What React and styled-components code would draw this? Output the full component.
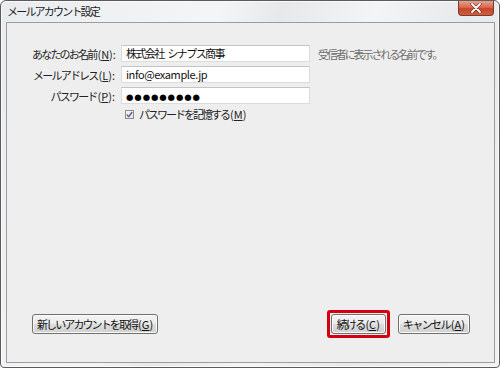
import React from "react";
import styled, { createGlobalStyle } from "styled-components";

const Global = createGlobalStyle`
  html, body { margin: 0; padding: 0; background: #ffffff; }
  body { font-family: "Noto Sans CJK JP", "Noto Sans", sans-serif; font-size: 11px; color: #1a1a1a; }
`;

const Window = styled.div`
  box-sizing: border-box;
  width: 500px;
  height: 368px;
  display: flex;
  flex-direction: column;
  border: 1px solid #5b5b5b;
  border-radius: 6px 6px 4px 4px;
  background: linear-gradient(110deg, #e9ecef 0%, #f4f5f6 35%, #e6e8ea 45%, #f3f4f5 60%, #e7e9eb 75%, #f1f2f3 100%);
  box-shadow: inset 0 0 0 1px #fafafa;
  overflow: hidden;
`;

const TitleBar = styled.div`
  height: 21px;
  display: flex;
  align-items: flex-start;
  justify-content: space-between;
  padding: 0 5px 0 6px;
`;

const Title = styled.div`
  font-size: 11px;
  line-height: 12px;
  padding-top: 4px;
  color: #222;
  letter-spacing: -1.8px;
`;

const CloseBtn = styled.div`
  width: 36px;
  height: 15px;
  box-sizing: border-box;
  border: 1px solid #7a3a2e;
  border-top: none;
  border-radius: 0 0 4px 4px;
  background: linear-gradient(#e8a090 0%, #d7694f 45%, #c5442a 55%, #d35c3d 100%);
  display: flex;
  align-items: center;
  justify-content: center;
`;

const Panel = styled.div`
  flex: 1;
  margin: 0 4px 4px 5px;
  border: 1px solid #9c9c9c;
  background: #eeeeee;
  display: flex;
  flex-direction: column;
  justify-content: space-between;
  padding: 22px 24px 24px 25px;
`;

const Form = styled.div`
  display: grid;
  grid-template-columns: 82px 189px auto;
  column-gap: 7px;
  row-gap: 4px;
  align-items: center;
`;

const Label = styled.div`
  text-align: right;
  white-space: nowrap;
  font-size: 11px;
  letter-spacing: -1.8px;
  color: #222;
  margin-right: -1px;
`;

const Key = styled.span`
  letter-spacing: 0;
  margin-left: 1px;
`;

const Input = styled.div`
  box-sizing: border-box;
  height: 17px;
  background: #fff;
  border: 1px solid #dcdcdc;
  border-top-color: #c4c4c4;
  font-size: 11px;
  line-height: 15px;
  padding-left: 4px;
  color: #111;
  white-space: nowrap;
  overflow: hidden;
  word-spacing: 3px;
  letter-spacing: ${(p) => p.$ls || 0}px;
`;

const Dots = styled.span`
  font-size: 8.5px;
  letter-spacing: 0.9px;
  color: #000;
  font-family: "DejaVu Sans", sans-serif;
`;

const Hint = styled.div`
  font-size: 11px;
  color: #6d6d6d;
  padding-left: 1px;
  white-space: nowrap;
  letter-spacing: -2.1px;
`;

const CheckRow = styled.label`
  grid-column: 2 / 4;
  display: flex;
  align-items: center;
  gap: 5px;
  padding-left: 4px;
  margin-top: -2px;
  font-size: 11px;
  letter-spacing: -2px;
  color: #222;
`;

const Box = styled.span`
  box-sizing: border-box;
  width: 9px;
  height: 9px;
  border: 1px solid #8e8e8e;
  background: linear-gradient(#f4f4f4, #e2e2e2);
  display: inline-flex;
  align-items: center;
  justify-content: center;
`;

const Footer = styled.div`
  display: flex;
  align-items: center;
  justify-content: space-between;
`;

const Right = styled.div`
  display: flex;
  align-items: center;
  gap: 8px;
`;

const Button = styled.div`
  box-sizing: border-box;
  height: 20px;
  padding: 0 ${(p) => p.$pad || 6}px;
  border: 1px solid #707070;
  border-radius: 3px;
  background: linear-gradient(#f4f4f4 0%, #ebebeb 48%, #dddddd 52%, #d0d0d0 100%);
  box-shadow: inset 0 0 0 1px #fbfbfb;
  font-size: 11px;
  line-height: 18px;
  color: #111;
  white-space: nowrap;
  letter-spacing: ${(p) => p.$ls || -1.8}px;
  display: flex;
  align-items: center;
`;

const Highlight = styled.div`
  border: 3px solid #d5000f;
  border-radius: 3px;
  padding: 1px;
  display: flex;
`;

const U = styled.span`
  text-decoration: underline;
  text-underline-offset: 1px;
`;

export default function App() {
  return (
    <>
      <Global />
      <Window>
        <TitleBar>
          <Title>メールアカウント設定</Title>
          <CloseBtn>
            <svg width="12" height="10" viewBox="0 0 12 10">
              <path d="M2 1 L10 9 M10 1 L2 9" stroke="#5a2418" strokeWidth="3" strokeLinecap="round" />
              <path d="M2 1 L10 9 M10 1 L2 9" stroke="#ffffff" strokeWidth="1.8" strokeLinecap="round" />
            </svg>
          </CloseBtn>
        </TitleBar>
        <Panel>
          <Form>
            <Label>
              あなたのお名前<Key>(<U>N</U>):</Key>
            </Label>
            <Input $ls={-1.6}>株式会社 シナプス商事</Input>
            <Hint>受信者に表示される名前です。</Hint>
            <Label>
              メールアドレス<Key>(<U>L</U>):</Key>
            </Label>
            <Input $ls={-0.4}>info@example.jp</Input>
            <div />
            <Label>
              パスワード<Key>(<U>P</U>):</Key>
            </Label>
            <Input>
              <Dots>●●●●●●●●●</Dots>
            </Input>
            <div />
            <div />
            <CheckRow>
              <Box>
                <svg width="7" height="7" viewBox="0 0 7 7">
                  <path d="M0.8 3.6 L2.7 5.6 L6.2 1" stroke="#4a5a78" strokeWidth="1.3" fill="none" />
                </svg>
              </Box>
              <span>
                パスワードを記憶する<Key>(<U>M</U>)</Key>
              </span>
            </CheckRow>
          </Form>
          <Footer>
            <Button $pad={4} $ls={-1.9}>
              新しいアカウントを取得<Key>(<U>G</U>)</Key>
            </Button>
            <Right>
              <Highlight>
                <Button $pad={5}>
                  続ける<Key>(<U>C</U>)</Key>
                </Button>
              </Highlight>
              <Button $pad={4} $ls={-1.6}>
                キャンセル<Key>(<U>A</U>)</Key>
              </Button>
            </Right>
          </Footer>
        </Panel>
      </Window>
    </>
  );
}
